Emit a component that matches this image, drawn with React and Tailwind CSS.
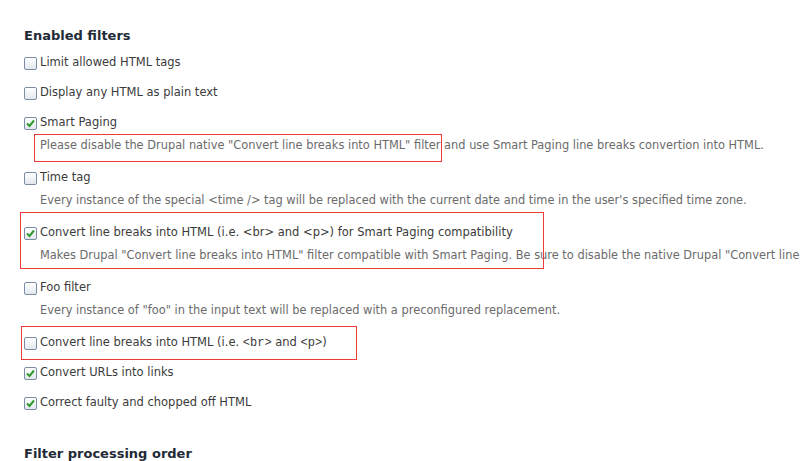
import React from 'react';

const mono = "font-['Liberation_Mono','DejaVu_Sans_Mono',monospace] text-[12px]";

const filters = [
    { label: 'Limit allowed HTML tags', checked: false },
    { label: 'Display any HTML as plain text', checked: false },
    {
        label: 'Smart Paging',
        checked: true,
        description: 'Please disable the Drupal native "Convert line breaks into HTML" filter and use Smart Paging line breaks convertion into HTML.',
    },
    {
        label: 'Time tag',
        checked: false,
        description: "Every instance of the special <time /> tag will be replaced with the current date and time in the user's specified time zone.",
    },
    {
        label: 'Convert line breaks into HTML (i.e. <br> and <p>) for Smart Paging compatibility',
        checked: true,
        description: 'Makes Drupal "Convert line breaks into HTML" filter compatible with Smart Paging. Be sure to disable the native Drupal "Convert line breaks into HTML" filter.',
    },
    {
        label: 'Foo filter',
        checked: false,
        description: 'Every instance of "foo" in the input text will be replaced with a preconfigured replacement.',
    },
    {
        label: (
            <>
                Convert line breaks into HTML (i.e. <code className={mono}>&lt;br&gt;</code> and{' '}
                <code className={mono}>&lt;p&gt;</code>)
            </>
        ),
        checked: false,
    },
    { label: 'Convert URLs into links', checked: true },
    { label: 'Correct faulty and chopped off HTML', checked: true },
];

function Checkbox({ checked }) {
    return (
        <span className="relative inline-block w-[13px] h-[13px] shrink-0 border border-[#7b8da3] rounded-[2px] bg-gradient-to-b from-white to-[#e3e8ee]">
            {checked && (
                <svg viewBox="0 0 13 13" className="absolute -left-px -top-px w-[13px] h-[13px]">
                    <path d="M3 6.5 L5.5 9 L10 3.5" fill="none" stroke="#2e9a2e" strokeWidth="2" />
                </svg>
            )}
        </span>
    );
}

function App() {
    return (
        <div className="relative w-[800px] h-[461px] overflow-hidden bg-white font-['DejaVu_Sans',Verdana,sans-serif] whitespace-nowrap">
            <div className="pl-6 pt-[27px]">
                <h2 className="text-[13px] leading-[18px] font-bold text-[#222a36] mb-[8px]">Enabled filters</h2>

                {filters.map((f, i) => (
                    <div key={i} className="pb-[10px]">
                        <label className="flex items-center gap-[3px] h-5 text-[11.5px] text-[#3b3b3b]">
                            <Checkbox checked={f.checked} />
                            <span>{f.label}</span>
                        </label>
                        {f.description && (
                            <div className="pl-4 mt-[2px] pb-[3px] leading-5 text-[11.4px] text-[#6b6b6b]">
                                {f.description}
                            </div>
                        )}
                    </div>
                ))}

                <h2 className="mt-[22px] text-[13px] leading-[18px] font-bold text-[#222a36]">Filter processing order</h2>
            </div>

            {/* red annotation boxes */}
            <div className="absolute left-[34px] top-[134px] w-[408px] h-[28px] border border-[#f03a3a]" />
            <div className="absolute left-[20px] top-[212px] w-[524px] h-[57px] border border-[#f03a3a]" />
            <div className="absolute left-[21px] top-[326px] w-[336px] h-[34px] border border-[#f03a3a]" />
        </div>
    );
}

export default App;
